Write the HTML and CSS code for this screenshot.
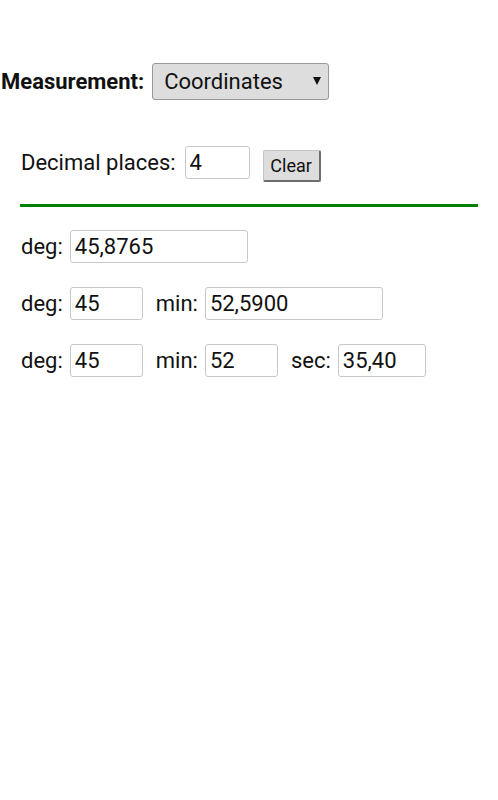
FILE: index.html
```html
<!DOCTYPE html>
<html lang="en">
  <head>
    <meta charset="UTF-8" />
    <meta name="viewport" content="width=device-width, initial-scale=1.0" />
    <title>Coordinates</title>
    <link rel="stylesheet" href="styles.css">
  </head>
  <body>
    <div class="measure">
      <label for="measurement">Measurement:</label>
      <span class="select-wrap">
        <select id="measurement">
          <option>Coordinates</option>
        </select>
      </span>
    </div>

    <div class="panel">
      <div class="decimals">
        <label for="places">Decimal places:</label>
        <input type="text" id="places" class="in-places" value="4" />
        <button type="button" id="clear">Clear</button>
      </div>

      <hr class="line" />

      <div class="row">
        <label for="deg1">deg:</label>
        <input type="text" id="deg1" class="in-wide" value="45,8765" />
      </div>

      <div class="row">
        <label for="deg2">deg:</label>
        <input type="text" id="deg2" class="in-small" value="45" />
        <label for="min2" class="next">min:</label>
        <input type="text" id="min2" class="in-wide" value="52,5900" />
      </div>

      <div class="row">
        <label for="deg3">deg:</label>
        <input type="text" id="deg3" class="in-small" value="45" />
        <label for="min3" class="next">min:</label>
        <input type="text" id="min3" class="in-small" value="52" />
        <label for="sec3" class="next">sec:</label>
        <input type="text" id="sec3" class="in-sec" value="35,40" />
      </div>
    </div>
  </body>
</html>
```

FILE: styles.css
```css
body {
  font-family: Roboto, "Liberation Sans", sans-serif;
  font-size: 22px;
  color: #111;
  background-color: #fff;
  margin: 0;
}
.measure {
  display: flex;
  align-items: center;
  height: 37px;
  margin-top: 63px;
  padding-left: 1px;
}
.measure label {
  font-weight: bold;
  margin-right: 8px;
}
.select-wrap {
  position: relative;
  display: inline-block;
  height: 37px;
}
.select-wrap::after {
  content: "";
  position: absolute;
  right: 8px;
  top: 14px;
  border-left: 4px solid transparent;
  border-right: 4px solid transparent;
  border-top: 8px solid #111;
  pointer-events: none;
}
select {
  -webkit-appearance: none;
  appearance: none;
  font-family: inherit;
  font-size: 22px;
  color: #111;
  width: 177px;
  height: 37px;
  padding: 0 0 0 11px;
  background-color: #ddd;
  border: 1px solid #999;
  border-radius: 3px;
}
.panel {
  padding: 0 20px;
}
.decimals {
  display: flex;
  align-items: center;
  height: 33px;
  margin-top: 46px;
}
.decimals label {
  margin-left: 1px;
  margin-right: 9px;
}
input {
  font-family: inherit;
  font-size: 22px;
  color: #111;
  height: 33px;
  box-sizing: border-box;
  padding: 0 4px;
  border: 1px solid #c8c8c8;
  border-radius: 3px;
  background-color: #fff;
}
.in-places {
  width: 65px;
}
.in-wide {
  width: 178px;
}
.in-small {
  width: 73px;
}
.in-sec {
  width: 88px;
}
button {
  font-family: inherit;
  font-size: 18px;
  color: #111;
  margin-left: 13px;
  margin-top: 6px;
  width: 58px;
  height: 32px;
  padding: 0;
  background-color: #ddd;
  border: 1px solid #c4c4c4;
  border-right: 2px solid #6e6e6e;
  border-bottom: 2px solid #6e6e6e;
  border-radius: 2px;
}
.line {
  border: none;
  border-top: 3px solid #008000;
  margin: 25px 0 0;
}
.row {
  display: flex;
  align-items: center;
  height: 33px;
  margin-top: 23px;
}
.row + .row {
  margin-top: 24px;
}
.row label {
  margin-left: 1px;
  margin-right: 7px;
}
.row label.next {
  margin-left: 13px;
}
```
